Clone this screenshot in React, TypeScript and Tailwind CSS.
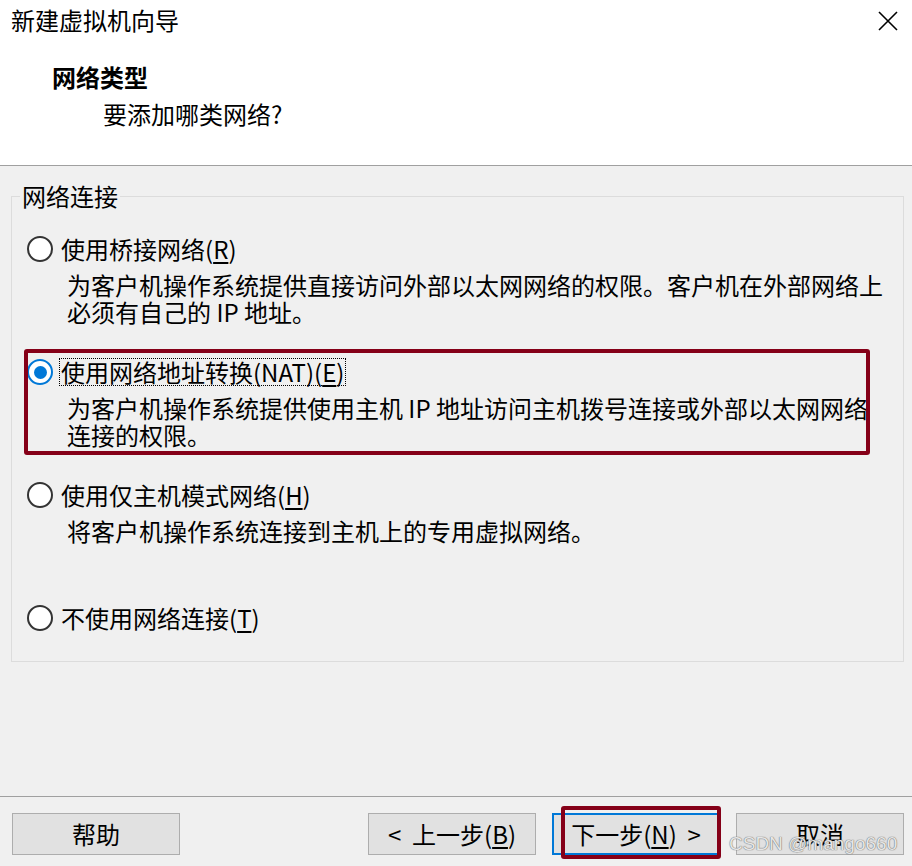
import React from "react";

const font = "font-['Microsoft_YaHei','Noto_Sans_CJK_SC',sans-serif]";

function Radio({ checked }: { checked?: boolean }) {
  return (
    <span
      className={
        "flex h-[26px] w-[26px] shrink-0 items-center justify-center rounded-full border-2 bg-white " +
        (checked ? "border-[#0078d7]" : "border-[#333333]")
      }
    >
      {checked && <span className="h-[13px] w-[13px] rounded-full bg-[#0078d7]" />}
    </span>
  );
}

type Option = {
  label: string;
  key: string;
  desc: string[];
  checked?: boolean;
  marked?: boolean;
};

const options: Option[] = [
  {
    label: "使用桥接网络",
    key: "R",
    desc: ["为客户机操作系统提供直接访问外部以太网网络的权限。客户机在外部网络上", "必须有自己的 IP 地址。"],
  },
  {
    label: "使用网络地址转换(NAT)",
    key: "E",
    desc: ["为客户机操作系统提供使用主机 IP 地址访问主机拨号连接或外部以太网网络", "连接的权限。"],
    checked: true,
    marked: true,
  },
  {
    label: "使用仅主机模式网络",
    key: "H",
    desc: ["将客户机操作系统连接到主机上的专用虚拟网络。"],
  },
  { label: "不使用网络连接", key: "T", desc: [] },
];

function OptionRow({ opt, last }: { opt: Option; last?: boolean }) {
  return (
    <div className="relative">
      {opt.marked && (
        <div className="pointer-events-none absolute -left-[3px] -top-[9px] h-[106px] w-[846px] rounded-[3px] border-4 border-[#850018]" />
      )}
      <div className="flex h-[28px] items-center">
        <Radio checked={opt.checked} />
        <span
          className={
            "ml-[6px] border px-[1px] text-[24px] leading-[26px] " +
            (opt.checked ? "border-dotted border-black" : "border-transparent")
          }
        >
          {opt.label}(<u className="underline-offset-[3px]">{opt.key}</u>)
        </span>
      </div>
      {!last && (
        <div className="mt-[8px] min-h-[54px] pl-[40px] text-[24px] leading-[27px]">
          {opt.desc.map((d, i) => (
            <div key={i} className="whitespace-nowrap">
              {d}
            </div>
          ))}
        </div>
      )}
    </div>
  );
}

function Button({ children, primary, marked }: { children: React.ReactNode; primary?: boolean; marked?: boolean }) {
  return (
    <div className="relative">
      <button
        className={
          "flex h-[42px] w-[168px] items-center justify-center bg-[#e1e1e1] text-[24px] leading-none " +
          (primary ? "border-2 border-[#0078d7]" : "border border-[#adadad]")
        }
      >
        {children}
      </button>
      {marked && (
        <div className="pointer-events-none absolute left-[9px] -top-[7px] h-[53px] w-[160px] rounded-[3px] border-4 border-[#850018]" />
      )}
    </div>
  );
}

export default function App() {
  return (
    <div className={"relative flex h-[866px] w-[912px] flex-col overflow-hidden bg-[#f0f0f0] text-black " + font}>
      <header className="h-[166px] shrink-0 border-b border-[#a0a0a0] bg-white">
        <div className="flex items-center justify-between pl-[11px] pr-[13px] pt-[4px]">
          <span className="text-[24px] leading-[32px]">新建虚拟机向导</span>
          <svg width="22" height="22" viewBox="0 0 22 22" className="mt-[1px]">
            <path d="M2 2 L20 20 M20 2 L2 20" stroke="#000" strokeWidth="1.6" fill="none" />
          </svg>
        </div>
        <div className="mt-[26px] pl-[52px] text-[24px] font-bold leading-[30px]">网络类型</div>
        <div className="mt-[7px] pl-[103px] text-[24px] leading-[30px]">要添加哪类网络?</div>
      </header>

      <main className="flex-1 px-[11px] pr-[8px] pt-[16px]">
        <fieldset className="h-[480px] border border-[#dcdcdc] pl-[15px]">
          <legend className="ml-[-7px] px-[2px] text-[24px] leading-[28px]">网络连接</legend>
          <div className="mt-[25px] flex flex-col gap-[33px]">
            {options.map((o, i) => (
              <OptionRow key={o.key} opt={o} last={i === options.length - 1} />
            ))}
          </div>
        </fieldset>
      </main>

      <footer className="flex h-[70px] shrink-0 items-start border-t border-[#a0a0a0] pl-[12px] pr-[8px] pt-[16px]">
        <Button>帮助</Button>
        <div className="ml-auto flex gap-[16px]">
          <Button>
            &lt;&nbsp; 上一步(<u className="underline-offset-[3px]">B</u>)
          </Button>
          <Button primary marked>
            下一步(<u className="underline-offset-[3px]">N</u>)&nbsp; &gt;
          </Button>
          <Button>取消</Button>
        </div>
      </footer>

      <div className="pointer-events-none absolute left-[729px] top-[831px] font-['Liberation_Sans',sans-serif] text-[19px] leading-[26px] text-[#e6e6e6] [text-shadow:0_0_1px_#6e6e6e,0_0_1px_#6e6e6e]">
        CSDN @mango660
      </div>
    </div>
  );
}
